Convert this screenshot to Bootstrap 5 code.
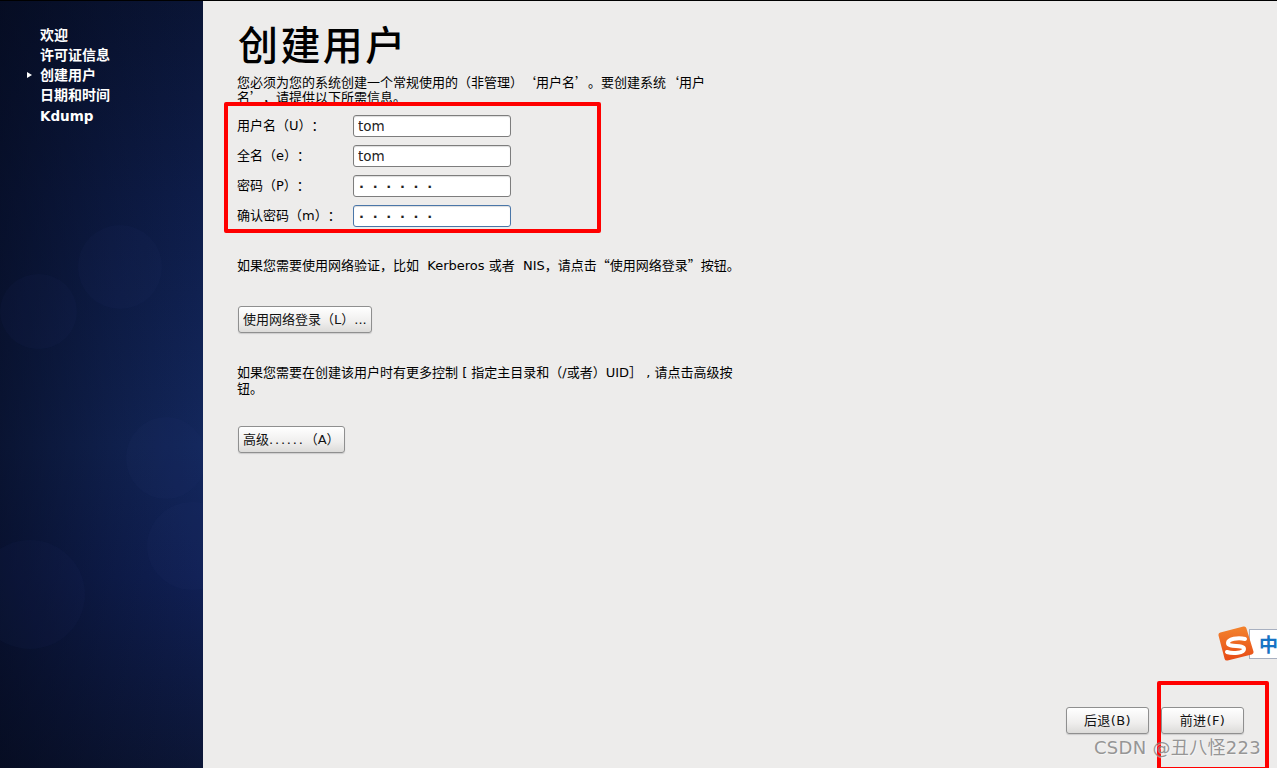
<!DOCTYPE html>
<html lang="zh">
<head>
<meta charset="utf-8">
<title>创建用户</title>
<link href="https://cdn.jsdelivr.net/npm/bootstrap@5.3.0/dist/css/bootstrap.min.css" rel="stylesheet">
<style>
html,body{height:100%;overflow:hidden}
body{background:#edeceb;color:#000;font-family:"DejaVu Sans","Noto Sans CJK SC",sans-serif;font-size:13px;line-height:16px;text-spacing-trim:space-all}
.shell{height:768px;border-top:1px solid #000}
.side{width:203px;flex:none;position:relative;overflow:hidden;padding:24px 0 0 40px;color:#fff;font-weight:700;font-size:14px;line-height:20px;
background:linear-gradient(90deg,rgba(3,7,22,.6) 0,rgba(3,7,22,.25) 55%,rgba(3,7,22,0) 100%),linear-gradient(180deg,#0a1536 0,#0e1d4a 25%,#13275c 58%,#102055 75%,#0c1636 100%)}
.bubble{position:absolute;border-radius:50%;background:rgba(50,75,135,.06)}
.step{position:relative}
.step-mark{position:absolute;left:-13px;top:7px;width:0;height:0;border-left:5px solid #fff;border-top:3.5px solid transparent;border-bottom:3.5px solid transparent}
.kd{font-size:13.5px;margin-top:1px}
.pane{position:relative;flex:1;padding:17px 0 0 34px}
.ttl{font-size:40px;line-height:50px;font-weight:500;margin:0 0 7px 1px;letter-spacing:2.4px;font-family:"Noto Sans CJK SC",sans-serif}
.intro{width:480px;height:27px;margin:0;line-height:14px}
.cq{font-family:"Noto Sans CJK SC",sans-serif}
.redbox{position:relative;background:#edeceb;width:377px;height:131px;margin:0 0 0 -13px;border:4px solid #f00;border-radius:2px;padding:5px 0 0 9px}
.frow{height:30px;display:flex;align-items:center}
.frow label{width:116px;flex:none;margin-top:-1px}
.fbox{width:158px;height:22px;border:1px solid #7d7d7d;border-radius:3px;background:#fff;padding:0 4px;font-family:"DejaVu Sans",sans-serif;font-size:13.5px;color:#222;box-shadow:inset 0 1px 1px #ddd;outline:0}
.fbox.active{border-color:#4a76a8}
.pw{letter-spacing:8.7px;font-weight:700;font-size:13px;padding-left:5px}
.note{margin:0;width:505px}
.after-box{margin-top:24px}
.after-n1{margin-top:32px}
.after-b1{margin-top:32px}
.after-n2{margin-top:29px}
.gbtn{display:inline-block;height:27px;padding:0 4px;margin-left:1px;background:linear-gradient(#fff,#efeeed 60%,#dcdbd9);border:1px solid #8f8f8f;border-radius:3px;font-size:13px;line-height:25px;color:#111;white-space:nowrap;box-shadow:0 1px 1px #ccc}
.dots{letter-spacing:1.8px}
.nav-btn{width:83px;height:27px;text-align:center;padding:0;margin:0;letter-spacing:.4px}
.foot{position:absolute;right:33px;top:706px;gap:12px}
.redgo{position:absolute;left:954px;top:680px;width:112px;height:90px;border:4px solid #f00;border-radius:2px;pointer-events:none}
.ime{position:absolute;left:1016px;top:625px;width:58px;height:35px}
.ime-bar{position:absolute;left:30px;top:3px;width:30px;height:30px;background:#fff;border:1px solid #a8b0c0;border-right:0;font:700 19px/27px "Noto Sans CJK SC",sans-serif;color:#1673c4;padding-left:9px;overflow:hidden}
.ime-s{position:absolute;left:-1px;top:0;width:36px;height:35px}
.wm{position:absolute;left:891px;top:734px;font-family:"DejaVu Sans","Noto Sans CJK SC",sans-serif;font-size:18px;line-height:26px;letter-spacing:.3px;color:rgba(125,125,125,.8);text-shadow:1px 1px 1px rgba(255,255,255,.5);white-space:nowrap}
</style>
</head>
<body>
<div class="shell d-flex">
  <nav class="side">
    <span class="bubble" style="left:78px;top:224px;width:84px;height:84px"></span>
    <span class="bubble" style="left:0;top:273px;width:77px;height:75px"></span>
    <span class="bubble" style="left:126px;top:416px;width:80px;height:82px"></span>
    <span class="bubble" style="left:147px;top:501px;width:90px;height:88px"></span>
    <span class="bubble" style="left:-25px;top:539px;width:110px;height:109px"></span>
    <div class="step">欢迎</div>
    <div class="step">许可证信息</div>
    <div class="step"><span class="step-mark"></span>创建用户</div>
    <div class="step">日期和时间</div>
    <div class="step kd">Kdump</div>
  </nav>
  <main class="pane">
    <h1 class="ttl">创建用户</h1>
    <p class="intro">您必须为您的系统创建一个常规使用的（非管理）<span class="cq">‘</span>用户名<span class="cq">’</span>。要创建系统<span class="cq">‘</span>用户名<span class="cq">’</span>，请提供以下所需信息。</p>
    <form class="redbox">
      <div class="frow"><label>用户名（U）：</label><input class="fbox" value="tom"></div>
      <div class="frow"><label>全名（e）：</label><input class="fbox" value="tom"></div>
      <div class="frow"><label>密码（P）：</label><input class="fbox pw" value="······"></div>
      <div class="frow"><label>确认密码（m）：</label><input class="fbox pw active" value="······"></div>
    </form>
    <p class="note after-box">如果您需要使用网络验证，比如&nbsp;&nbsp;Kerberos 或者&nbsp;&nbsp;NIS，请点击<span class="cq">“</span>使用网络登录<span class="cq">”</span>按钮。</p>
    <div class="after-n1"><button type="button" class="gbtn">使用网络登录（L）...</button></div>
    <p class="note after-b1">如果您需要在创建该用户时有更多控制 [ 指定主目录和（/或者）UID］ , 请点击高级按钮。</p>
    <div class="after-n2"><button type="button" class="gbtn">高级<span class="dots">......</span>（A）</button></div>
    <div class="foot d-flex">
      <button type="button" class="gbtn nav-btn">后退(B)</button>
      <button type="button" class="gbtn nav-btn">前进(F)</button>
    </div>
    <div class="redgo"></div>
    <div class="ime">
      <div class="ime-bar">中</div>
      <svg class="ime-s" viewBox="0 0 36 35"><defs><linearGradient id="sg" x1="0" y1="0" x2="0" y2="1"><stop offset="0" stop-color="#f2802c"/><stop offset="1" stop-color="#e84f18"/></linearGradient></defs><polygon points="3,9 26,3 33,26 9,32" fill="url(#sg)" stroke="url(#sg)" stroke-width="5" stroke-linejoin="round"/><path d="M27 13C20 11 10 13 10 17 10 22 26 18 26 23 26 27 15 28 9 26" fill="none" stroke="#fff" stroke-width="4" stroke-linecap="round"/></svg>
    </div>
    <div class="wm">CSDN @丑八怪223</div>
  </main>
</div>
<script src="https://cdn.jsdelivr.net/npm/bootstrap@5.3.0/dist/js/bootstrap.bundle.min.js"></script>
</body>
</html>
